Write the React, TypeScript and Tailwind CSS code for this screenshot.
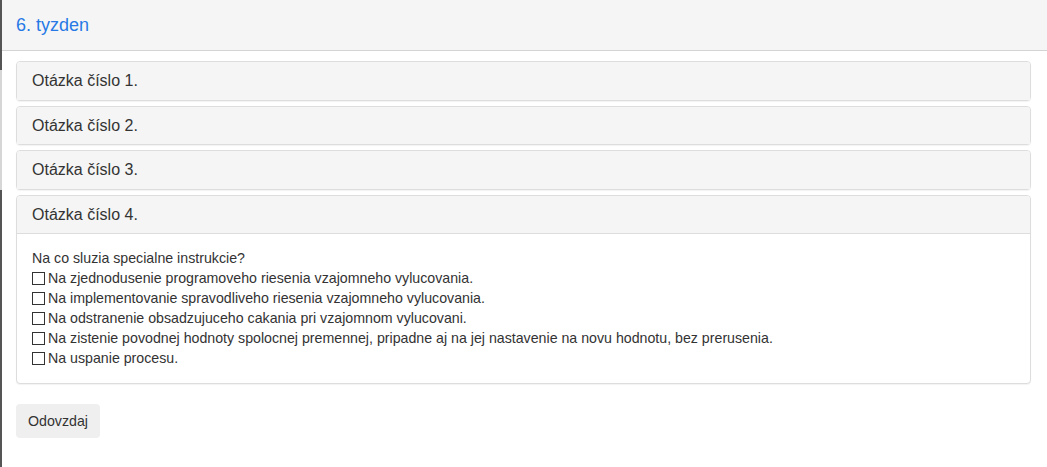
const questions = [1, 2, 3];

const answers = [
  "Na zjednodusenie programoveho riesenia vzajomneho vylucovania.",
  "Na implementovanie spravodliveho riesenia vzajomneho vylucovania.",
  "Na odstranenie obsadzujuceho cakania pri vzajomnom vylucovani.",
  "Na zistenie povodnej hodnoty spolocnej premennej, pripadne aj na jej nastavenie na novu hodnotu, bez prerusenia.",
  "Na uspanie procesu.",
];

export default function App() {
  return (
    <div className="flex min-h-[467px] bg-white text-[#333] font-['Liberation_Sans',Arial,sans-serif]">
      {/* window edge */}
      <div className="flex w-[2px] shrink-0 flex-col">
        <div className="h-[70px] bg-[#555]" />
        <div className="h-[120px] bg-[#d6d6d6]" />
        <div className="flex-1 bg-[#555]" />
      </div>

      <div className="flex-1">
        <div className="flex h-[51px] items-center border-b border-[#d4d4d4] bg-[#f5f5f5] px-[14px]">
          <h3 className="text-[18px] leading-none text-[#2779e6]">6. tyzden</h3>
        </div>

        <div className="ml-[14px] mr-[16px] mt-[10px] mb-[20px] flex flex-col gap-[5px]">
          {questions.map((n) => (
            <div
              key={n}
              className="rounded-[4px] border border-[#ddd] bg-white shadow-[0_1px_1px_rgba(0,0,0,0.05)]"
            >
              <div className="rounded-t-[3px] bg-[#f5f5f5] px-[15px] py-[10px] text-[16px] leading-[17.6px]">
                Otázka číslo {n}.
              </div>
            </div>
          ))}

          <div className="rounded-[4px] border border-[#ddd] bg-white shadow-[0_1px_1px_rgba(0,0,0,0.05)]">
            <div className="rounded-t-[3px] bg-[#f5f5f5] px-[15px] py-[10px] text-[16px] leading-[17.6px]">
              Otázka číslo 4.
            </div>
            <div className="border-t border-[#ddd] px-[15px] pt-[14px] pb-[15px] text-[14.2px] leading-[20px]">
              <div>Na co sluzia specialne instrukcie?</div>
              {answers.map((a) => (
                <div key={a} className="flex items-center">
                  <span className="mr-[3px] inline-block h-[13px] w-[13px] border border-[#333] bg-white" />
                  <span>{a}</span>
                </div>
              ))}
            </div>
          </div>
        </div>

        <button className="ml-[14px] rounded-[4px] bg-[#efefef] px-[12px] py-[7px] text-[14.2px] leading-[20px] text-[#333]">
          Odovzdaj
        </button>
      </div>
    </div>
  );
}
